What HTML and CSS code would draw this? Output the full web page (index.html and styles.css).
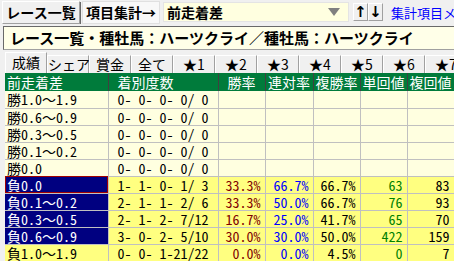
FILE: index.html
```html
<!DOCTYPE html>
<html lang="ja">
<head>
    <meta charset="UTF-8">
    <title>集計</title>
    <link rel="stylesheet" href="styles.css">
</head>
<body>
    <div class="toolbar">
        <button class="btnBig">レース一覧</button>
        <button class="btnBig btnFlat">項目集計→</button>
        <div class="combo">
            <span>前走着差</span>
            <span class="comboArrow"></span>
        </div>
        <button class="btnArrow">↑</button>
        <button class="btnArrow">↓</button>
        <span class="menuLink">集計項目メニュー</span>
    </div>
    <div class="titleBox">レース一覧・種牡馬：ハーツクライ／種牡馬：ハーツクライ</div>
    <div class="tabs">
        <div class="tab active">成績</div>
        <div class="tab">シェア</div>
        <div class="tab">賞金</div>
        <div class="tab">全て</div>
        <div class="tab">★1</div>
        <div class="tab">★2</div>
        <div class="tab">★3</div>
        <div class="tab">★4</div>
        <div class="tab">★5</div>
        <div class="tab">★6</div>
        <div class="tab">★7</div>
    </div>
    <table class="grid">
        <colgroup>
            <col class="c1"><col class="c2"><col class="cn"><col class="cw"><col class="cn"><col class="cn"><col class="cn">
        </colgroup>
        <thead>
            <tr>
                <th class="left">前走着差</th>
                <th class="left pad">着別度数</th>
                <th>勝率</th>
                <th>連対率</th>
                <th>複勝率</th>
                <th>単回値</th>
                <th>複回値</th>
            </tr>
        </thead>
        <tbody>
            <tr class="pale"><td>勝1.0～1.9</td><td class="pad">0- 0- 0- 0/ 0</td><td></td><td></td><td></td><td></td><td></td></tr>
            <tr class="pale"><td>勝0.6～0.9</td><td class="pad">0- 0- 0- 0/ 0</td><td></td><td></td><td></td><td></td><td></td></tr>
            <tr class="pale"><td>勝0.3～0.5</td><td class="pad">0- 0- 0- 0/ 0</td><td></td><td></td><td></td><td></td><td></td></tr>
            <tr class="pale"><td>勝0.1～0.2</td><td class="pad">0- 0- 0- 0/ 0</td><td></td><td></td><td></td><td></td><td></td></tr>
            <tr class="pale"><td>勝0.0</td><td class="pad">0- 0- 0- 0/ 0</td><td></td><td></td><td></td><td></td><td></td></tr>
            <tr class="hit"><td class="sel focus">負0.0</td><td class="pad">1- 1- 0- 1/ 3</td><td class="red">33.3%</td><td class="blue">66.7%</td><td class="num">66.7%</td><td class="green">63</td><td class="num">83</td></tr>
            <tr class="hit"><td class="sel">負0.1～0.2</td><td class="pad">2- 1- 1- 2/ 6</td><td class="red">33.3%</td><td class="blue">50.0%</td><td class="num">66.7%</td><td class="green">76</td><td class="num">93</td></tr>
            <tr class="hit"><td class="sel">負0.3～0.5</td><td class="pad">2- 1- 2- 7/12</td><td class="red">16.7%</td><td class="blue">25.0%</td><td class="num">41.7%</td><td class="green">65</td><td class="num">70</td></tr>
            <tr class="hit"><td class="sel">負0.6～0.9</td><td class="pad">3- 0- 2- 5/10</td><td class="red">30.0%</td><td class="blue">30.0%</td><td class="num">50.0%</td><td class="green">422</td><td class="num">159</td></tr>
            <tr class="hit"><td>負1.0～1.9</td><td class="pad">0- 0- 1-21/22</td><td class="red">0.0%</td><td class="blue">0.0%</td><td class="num">4.5%</td><td class="green">0</td><td class="num">7</td></tr>
        </tbody>
    </table>
</body>
</html>
```

FILE: styles.css
```css
* {
    margin: 0;
    padding: 0;
    box-sizing: border-box;
}

body {
    width: 454px;
    height: 261px;
    overflow: hidden;
    background-color: #f0f0f0;
    font-family: "Noto Sans CJK JP", sans-serif;
    color: black;
}

.toolbar {
    display: flex;
    align-items: center;
    height: 24px;
    padding-left: 2px;
    white-space: nowrap;
    overflow: hidden;
}

.toolbar > * {
    flex: none;
}

.btnBig {
    width: 78px;
    height: 23px;
    margin-right: 2px;
    padding: 0;
    font-family: "Noto Sans CJK JP", sans-serif;
    font-size: 14px;
    font-weight: bold;
    line-height: 19px;
    background-color: #f0f0f0;
    border: 1px solid #a0a0a0;
    border-top-color: #ffffff;
    border-left-color: #ffffff;
    box-shadow: 1px 1px 0 #696969;
}

.btnFlat {
    background-color: #f8f8f8;
    border-color: #e0e0e0;
    box-shadow: none;
}

.combo {
    display: flex;
    align-items: center;
    justify-content: space-between;
    width: 186px;
    height: 20px;
    margin-left: 1px;
    padding: 0 8px 0 3px;
    background-color: #ffffe0;
    border: 1px solid #e4e4e4;
    font-size: 14px;
    font-weight: bold;
    line-height: 18px;
}

.comboArrow {
    width: 0;
    height: 0;
    border-left: 6px solid transparent;
    border-right: 6px solid transparent;
    border-top: 8px solid #808080;
}

.btnArrow {
    width: 15px;
    height: 18px;
    margin-left: 4px;
    padding: 0;
    font-family: "DejaVu Sans", sans-serif;
    font-size: 15px;
    font-weight: bold;
    line-height: 14px;
    background-color: #f0f0f0;
    border: 1px solid #a0a0a0;
    border-top-color: #ffffff;
    border-left-color: #ffffff;
}

.btnArrow + .btnArrow {
    margin-left: 0;
}

.menuLink {
    margin-left: 8px;
    color: #0000ff;
    font-size: 13px;
}

.titleBox {
    height: 24px;
    margin: 2px 0 0 3px;
    width: 460px;
    padding-left: 6px;
    background-color: #ffffe8;
    border: 1px solid #a0a0a0;
    border-top-color: #696969;
    border-left-color: #696969;
    font-size: 15px;
    font-weight: bold;
    line-height: 21px;
    white-space: nowrap;
    overflow: hidden;
}

.tabs {
    display: flex;
    align-items: flex-end;
    height: 22px;
    margin-top: 1px;
    padding-left: 5px;
    white-space: nowrap;
}

.tab {
    flex: none;
    width: 42px;
    height: 18px;
    font-size: 14px;
    line-height: 16px;
    text-align: center;
    background-color: #f0f0f0;
    border: 1px solid #a0a0a0;
    border-top-color: #ffffff;
    border-left-color: #ffffff;
    border-bottom: none;
}

.tab.active {
    height: 21px;
    line-height: 19px;
}

.grid {
    margin-left: 5px;
    border-collapse: collapse;
    table-layout: fixed;
    width: 449px;
    font-family: "Noto Sans Mono CJK JP", "Liberation Mono", monospace;
    font-size: 14px;
    white-space: nowrap;
}

.c1 {
    width: 103px;
}

.c2 {
    width: 110px;
}

.cn {
    width: 47px;
}

.cw {
    width: 48px;
}

.grid th {
    height: 18px;
    padding: 0;
    background-color: #007b3b;
    color: white;
    font-weight: normal;
    line-height: 18px;
    border-right: 1px solid #404040;
    text-align: center;
    overflow: hidden;
}

.grid th.left {
    text-align: left;
    padding-left: 2px;
}

.grid td {
    height: 17px;
    padding: 0 4px 0 2px;
    line-height: 16px;
    border: 1px solid #c0c0c0;
    border-top: none;
    text-align: right;
    overflow: hidden;
}

.grid td:first-child {
    text-align: left;
    border-left: none;
}

.grid th.pad,
.grid td.pad {
    text-align: left;
    padding-left: 9px;
}

.pale td {
    background-color: #ffffe0;
}

.hit td {
    background-color: #ffff80;
}

.hit td.sel {
    background-color: #000080;
    color: white;
}

.hit td.focus {
    outline: 1px solid #a00000;
    outline-offset: -1px;
}

.red {
    color: #800000;
}

.blue {
    color: #0000ff;
}

.green {
    color: #008000;
}

.num {
    color: black;
}
```
